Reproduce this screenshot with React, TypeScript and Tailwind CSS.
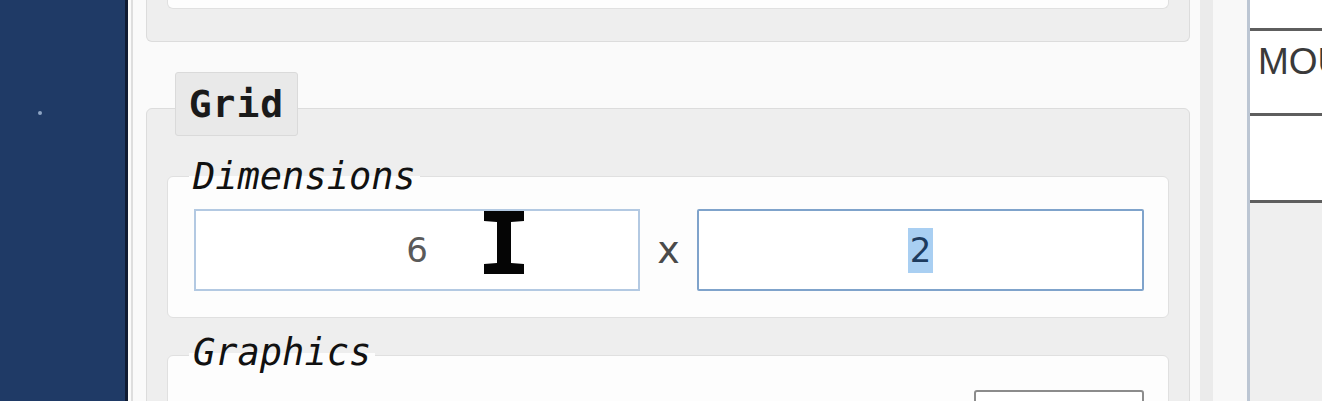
import React from "react";

const mono = { fontFamily: '"DejaVu Sans Mono", "Liberation Mono", monospace' };
const sans = { fontFamily: '"DejaVu Sans", "Liberation Sans", sans-serif' };

const IBeam = () => (
  <svg width="40" height="63" viewBox="0 0 40 63" className="absolute left-[288px] top-0">
    <polygon
      points="0,0 40,0 40,10 27,11 27,52 40,53 40,63 0,63 0,53 13,52 13,11 0,10"
      fill="#050505"
    />
  </svg>
);

const Legend = ({ children }: { children: React.ReactNode }) => (
  <div className="relative z-10 ml-[22px] h-[37px]">
    <span
      className="inline-block h-[37px] px-[4px] text-[37px] italic leading-[37px] text-[#111] bg-[linear-gradient(#eeeeee_50%,#fdfdfd_50%)]"
      style={mono}
    >
      {children}
    </span>
  </div>
);

const App = () => {
  return (
    <div className="flex h-[401px] w-[1322px] overflow-hidden bg-[#fafafa]">
      {/* desktop behind the window */}
      <div className="relative w-[128px] shrink-0 border-r-[3px] border-[#0f1b33] bg-[#1f3a66]">
        <div className="absolute left-[38px] top-[111px] h-[4px] w-[4px] rounded-full bg-[#8ea4c4]" />
      </div>

      {/* settings panel */}
      <div className="flex flex-1 pl-[3px]">
        <div className="flex-1 border-l-2 border-[#dedede] pl-[13px] pr-[10px]">
          {/* previous group, scrolled mostly out of view */}
          <div className="h-[42px] rounded-b-[6px] border-x border-b border-[#dcdcdc] bg-[#eeeeee] px-[20px]">
            <div className="h-[9px] rounded-b-[6px] border-x border-b border-[#e0e0e0] bg-[#fdfdfd]" />
          </div>

          {/* Grid group */}
          <div
            className="relative z-10 ml-[29px] mt-[30px] flex h-[64px] w-[123px] items-center justify-center rounded-[3px] border border-[#dadada] bg-[#e9e9e9] text-[38px] font-bold tracking-[1px] text-[#1a1a1a]"
            style={mono}
          >
            Grid
          </div>
          <div className="-mt-[28px] h-[400px] rounded-[6px] border border-[#dcdcdc] bg-[#eeeeee] px-[20px] pt-[49px]">
            <Legend>Dimensions</Legend>
            <div className="-mt-[19px] flex items-center rounded-[6px] border border-[#e0e0e0] bg-[#fdfdfd] pb-[26px] pl-[26px] pr-[24px] pt-[32px]">
              <div
                className="relative flex h-[82px] w-[446px] items-center justify-center border-2 border-[#b3c9e2] bg-white text-[34px] text-[#5a5a5a]"
                style={sans}
              >
                6
                <IBeam />
              </div>
              <span className="w-[57px] text-center text-[38px] leading-none text-[#4a4a4a]" style={sans}>
                x
              </span>
              <div
                className="flex h-[82px] flex-1 items-center justify-center rounded-[2px] border-2 border-[#7fa3cb] bg-white text-[34px] text-[#1d3b5e]"
                style={sans}
              >
                <span className="bg-[#a9cff2] px-[2px] leading-[45px]">2</span>
              </div>
            </div>

            <div className="mt-[16px]">
              <Legend>Graphics</Legend>
            </div>
            <div className="-mt-[16px] flex h-[120px] justify-end rounded-[6px] border border-[#e0e0e0] bg-[#fdfdfd] pr-[24px] pt-[34px]">
              <div className="h-[40px] w-[170px] rounded-[3px] border-2 border-[#8c8c8c] bg-white" />
            </div>
          </div>
        </div>
        <div className="w-[13px] bg-[#ebebeb]" />
        <div className="w-[34px] bg-[#f8f8f8]" />
      </div>

      {/* table on the right */}
      <div className="flex w-[75px] shrink-0 flex-col border-l-[3px] border-[#bcc6d3] bg-white">
        <div className="h-[28px]" />
        <div className="h-[3px] bg-[#5e5e5e]" />
        <div
          className="h-[82px] overflow-hidden whitespace-nowrap pl-[8px] pt-[12px] text-[37px] leading-none text-[#3a3a3a]"
          style={{ fontFamily: '"Liberation Sans", Arial, sans-serif' }}
        >
          MOUSE
        </div>
        <div className="h-[3px] bg-[#5e5e5e]" />
        <div className="h-[84px]" />
        <div className="h-[3px] bg-[#5e5e5e]" />
        <div className="flex-1 bg-[#efefef]" />
      </div>
    </div>
  );
};

export default App;
